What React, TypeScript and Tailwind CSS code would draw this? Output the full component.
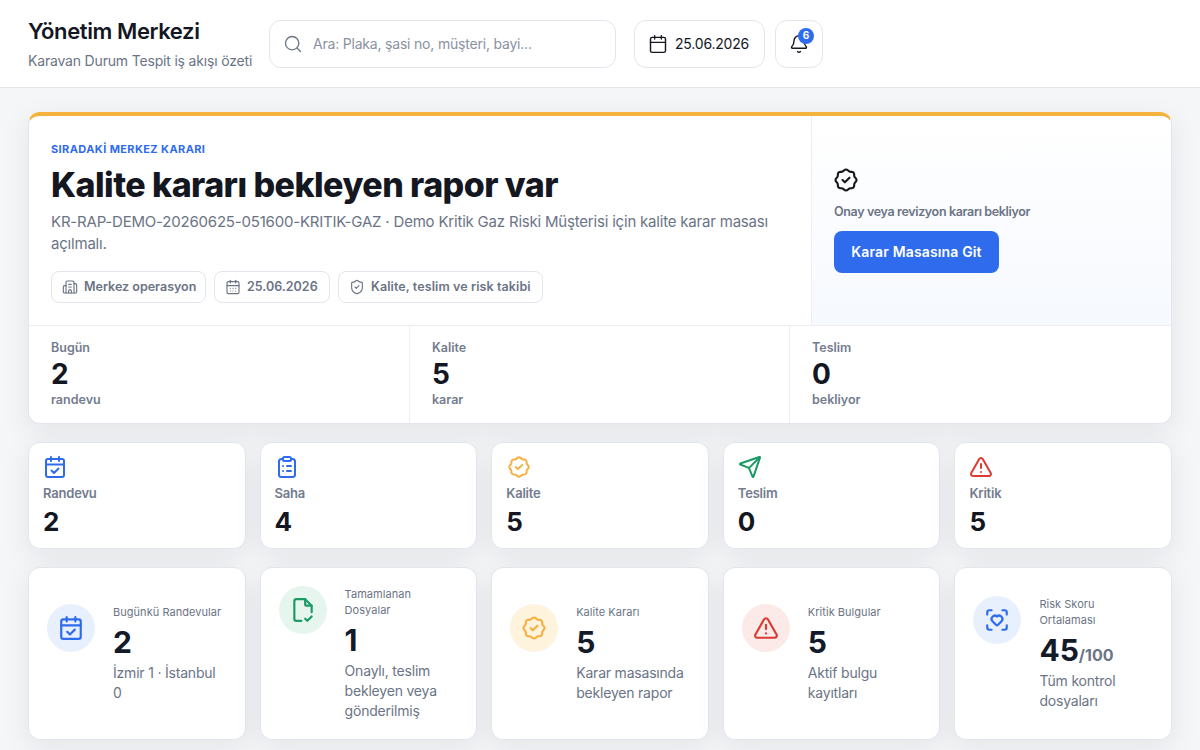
import { Building2, Calendar, CalendarDays, ScanHeart, Search, Bell, Send, ShieldCheck, TriangleAlert } from "lucide-react";
import { TbRosetteDiscountCheck } from "react-icons/tb";

function CalendarTick({ className }: { className: string }) {
  return (
    <svg viewBox="0 0 24 24" fill="none" stroke="currentColor" strokeWidth="2" strokeLinecap="round" strokeLinejoin="round" className={className}>
      <rect x="3" y="4" width="18" height="18" rx="2" />
      <path d="M8 2v4M16 2v4M3 9.5h18" />
      <path d="m8.5 15.5 2.5 2.5 4.5-4.5" />
    </svg>
  );
}

function ClipboardLines({ className }: { className: string }) {
  return (
    <svg viewBox="0 0 24 24" fill="none" stroke="currentColor" strokeWidth="2" strokeLinecap="round" strokeLinejoin="round" className={className}>
      <path d="M8 4H6.5A2.5 2.5 0 0 0 4 6.5v13A2.5 2.5 0 0 0 6.5 22h11a2.5 2.5 0 0 0 2.5-2.5v-13A2.5 2.5 0 0 0 17.5 4H16" />
      <rect x="8" y="2" width="8" height="4" rx="1.5" />
      <path d="M8 11h.01M8 16h.01M12 11h4M12 16h4" />
    </svg>
  );
}

function FileTick({ className }: { className: string }) {
  return (
    <svg viewBox="0 0 24 24" fill="none" stroke="currentColor" strokeWidth="2" strokeLinecap="round" strokeLinejoin="round" className={className}>
      <path d="M10.5 22H6a2 2 0 0 1-2-2V4a2 2 0 0 1 2-2h8l6 6v6" />
      <path d="M14 2v5a1 1 0 0 0 1 1h5" />
      <path d="m14 20 2 2 4-4" />
    </svg>
  );
}

const quick = [
  { label: "Randevu", value: "2", icon: <CalendarTick className="h-6 w-6 text-[#2f6bed]" /> },
  { label: "Saha", value: "4", icon: <ClipboardLines className="h-6 w-6 text-[#2f6bed]" /> },
  { label: "Kalite", value: "5", icon: <TbRosetteDiscountCheck className="h-[26px] w-[26px] text-[#f5b041]" strokeWidth={1.8} /> },
  { label: "Teslim", value: "0", icon: <Send className="h-6 w-6 text-[#1a9b63]" strokeWidth={2} /> },
  { label: "Kritik", value: "5", icon: <TriangleAlert className="h-6 w-6 text-[#dc3a32]" strokeWidth={2} /> },
];

function Chip({ icon, text, className }: { icon: React.ReactNode; text: string; className: string }) {
  return (
    <div className={`flex h-8 items-center gap-[6px] rounded-lg border border-[#e1e5ec] bg-white pl-[10px] text-[12.5px] font-semibold text-[#6b7485] ${className}`}>
      {icon}
      {text}
    </div>
  );
}

function Metric({ label, value, note, width }: { label: string; value: string; note: string; width: string }) {
  return (
    <div className={`px-[22px] pb-[15px] pt-[14px] ${width}`}>
      <div className="text-[12.5px] font-semibold leading-[16px] text-[#737c8e]">{label}</div>
      <div className="mt-[2px] text-[28px] font-bold leading-[32px] text-[#14171f]">{value}</div>
      <div className="mt-[2px] text-[12.5px] font-semibold leading-[16px] text-[#737c8e]">{note}</div>
    </div>
  );
}

function Summary({ icon, bg, title, value, suffix, note }: { icon: React.ReactNode; bg: string; title: string[]; value: string; suffix?: string; note: string[] }) {
  return (
    <div className="flex h-[173px] items-center rounded-xl border border-[#e2e6ed] bg-white pl-[18px] pr-3 shadow-[0_8px_30px_rgba(15,23,42,0.08)]">
      <div className="flex items-start gap-[18px]">
        <div className={`flex h-12 w-12 shrink-0 items-center justify-center rounded-full ${bg}`}>{icon}</div>
        <div className="min-w-0">
          <div className="text-[11px] leading-[16px] tracking-[0.04px] text-[#6b7485]">
            {title.map((t) => (
              <div key={t}>{t}</div>
            ))}
          </div>
          <div className="mt-[4px] text-[30px] font-bold leading-[36px] text-[#131a2a]">
            {value}
            {suffix && <span className="text-base text-[#6b7485]">{suffix}</span>}
          </div>
          <div className="mt-[3px] text-sm leading-[20px] tracking-[-0.2px] text-[#6b7485]">
            {note.map((t) => (
              <div key={t}>{t}</div>
            ))}
          </div>
        </div>
      </div>
    </div>
  );
}

export default function App() {
  return (
    <div className="h-[750px] overflow-hidden bg-[#f5f6f8] font-['Inter',sans-serif]">
      <header className="flex h-[88px] items-center border-b border-[#e3e6eb] bg-white px-7">
        <div className="w-[241px] shrink-0">
          <h1 className="text-[22px] font-semibold leading-[28px] tracking-[-0.4px] text-[#14171f]">Yönetim Merkezi</h1>
          <p className="mt-[7px] text-sm leading-[18px] tracking-[-0.18px] text-[#6b7485]">Karavan Durum Tespit iş akışı özeti</p>
        </div>
        <div className="flex h-12 w-[347px] items-center gap-[10px] rounded-xl border border-[#e1e5ec] pl-[13px]">
          <Search className="h-5 w-5 text-[#6b7485]" strokeWidth={1.6} />
          <span className="text-sm tracking-[-0.2px] text-[#8a92a1]">Ara: Plaka, şasi no, müşteri, bayi...</span>
        </div>
        <div className="ml-[18px] flex h-12 w-[131px] items-center gap-[7px] rounded-xl border border-[#e1e5ec] pl-[13px] text-sm tracking-[-0.2px] text-[#14171f]">
          <Calendar className="h-5 w-5" strokeWidth={1.7} />
          25.06.2026
        </div>
        <div className="relative ml-[10px] flex h-12 w-12 items-center justify-center rounded-xl border border-[#e1e5ec]">
          <Bell className="h-5 w-5 text-[#14171f]" strokeWidth={1.7} />
          <span className="absolute left-[22px] top-[7px] flex h-4 w-4 items-center justify-center rounded-full bg-[#2f6bed] text-[10px] font-bold text-white">6</span>
        </div>
      </header>

      <main className="px-7 pt-6">
        <section className="overflow-hidden rounded-xl border border-t-4 border-[#e2e6ed] border-t-[#f5b33e] bg-white shadow-[0_8px_30px_rgba(15,23,42,0.08)]">
          <div className="flex h-[210px] border-b border-[#eceef2]">
            <div className="flex-1 px-[22px] pt-[26px]">
              <div className="text-[11px] font-bold leading-[14px] tracking-[0.4px] text-[#2f6bed]">SIRADAKİ MERKEZ KARARI</div>
              <h2 className="mt-[7px] text-[34px] font-extrabold leading-[44px] tracking-[-0.55px] text-[#14171f]">Kalite kararı bekleyen rapor var</h2>
              <p className="mt-[4px] text-[15px] leading-[22px] tracking-[-0.2px] text-[#6b7485]">
                KR-RAP-DEMO-20260625-051600-KRITIK-GAZ · Demo Kritik Gaz Riski Müşterisi için kalite karar masası açılmalı.
              </p>
              <div className="mt-[16px] flex gap-2">
                <Chip className="w-[155px]" icon={<Building2 className="h-4 w-4" strokeWidth={1.7} />} text="Merkez operasyon" />
                <Chip className="w-[116px]" icon={<CalendarDays className="h-4 w-4" strokeWidth={1.7} />} text="25.06.2026" />
                <Chip className="w-[205px] tracking-[0.1px]" icon={<ShieldCheck className="h-4 w-4" strokeWidth={1.7} />} text="Kalite, teslim ve risk takibi" />
              </div>
            </div>
            <div className="flex w-[360px] shrink-0 flex-col items-start justify-center border-l border-[#eceef2] bg-gradient-to-b from-white to-[#f6f9fe] px-[22px] pb-[2px]">
              <TbRosetteDiscountCheck className="-ml-[2px] h-[28px] w-[28px] text-[#14171f]" strokeWidth={1.8} />
              <div className="mt-[10px] text-[12.5px] font-semibold leading-[16px] tracking-[-0.35px] text-[#6b7485]">Onay veya revizyon kararı bekliyor</div>
              <button className="mt-[11px] h-[42px] w-[165px] rounded-lg bg-[#2f6bed] text-sm font-semibold tracking-[0.15px] text-white">Karar Masasına Git</button>
            </div>
          </div>
          <div className="flex">
            <Metric label="Bugün" value="2" note="randevu" width="w-[381px] border-r border-[#eceef2]" />
            <Metric label="Kalite" value="5" note="karar" width="w-[380px] border-r border-[#eceef2]" />
            <Metric label="Teslim" value="0" note="bekliyor" width="flex-1" />
          </div>
        </section>

        <div className="mt-[18px] grid grid-cols-5 gap-[14px]">
          {quick.map((q) => (
            <div key={q.label} className="h-[107px] rounded-xl border border-[#e2e6ed] bg-white px-[14px] pt-[12px] shadow-[0_8px_30px_rgba(15,23,42,0.08)]">
              <div className="flex h-6 items-center">{q.icon}</div>
              <div className="mt-[6px] text-[13px] font-semibold leading-[16px] tracking-[-0.2px] text-[#737c8e]">{q.label}</div>
              <div className="mt-[5px] text-[26px] font-bold leading-[32px] text-[#14171f]">{q.value}</div>
            </div>
          ))}
        </div>

        <div className="mt-[18px] grid grid-cols-5 gap-[14px]">
          <Summary bg="bg-[#e9f0fd]" icon={<CalendarTick className="h-[26px] w-[26px] text-[#2f6bed]" />} title={["Bugünkü Randevular"]} value="2" note={["İzmir 1 · İstanbul", "0"]} />
          <Summary bg="bg-[#e6f5ee]" icon={<FileTick className="h-[26px] w-[26px] text-[#1a9b63]" />} title={["Tamamlanan", "Dosyalar"]} value="1" note={["Onaylı, teslim", "bekleyen veya", "gönderilmiş"]} />
          <Summary bg="bg-[#fef3dd]" icon={<TbRosetteDiscountCheck className="h-[28px] w-[28px] text-[#f5b041]" strokeWidth={1.8} />} title={["Kalite Kararı"]} value="5" note={["Karar masasında", "bekleyen rapor"]} />
          <Summary bg="bg-[#fceae8]" icon={<TriangleAlert className="h-[26px] w-[26px] text-[#dc3a32]" strokeWidth={2} />} title={["Kritik Bulgular"]} value="5" note={["Aktif bulgu", "kayıtları"]} />
          <Summary bg="bg-[#e9f0fd]" icon={<ScanHeart className="h-[26px] w-[26px] text-[#2f6bed]" strokeWidth={2} />} title={["Risk Skoru", "Ortalaması"]} value="45" suffix="/100" note={["Tüm kontrol", "dosyaları"]} />
        </div>
      </main>
    </div>
  );
}
